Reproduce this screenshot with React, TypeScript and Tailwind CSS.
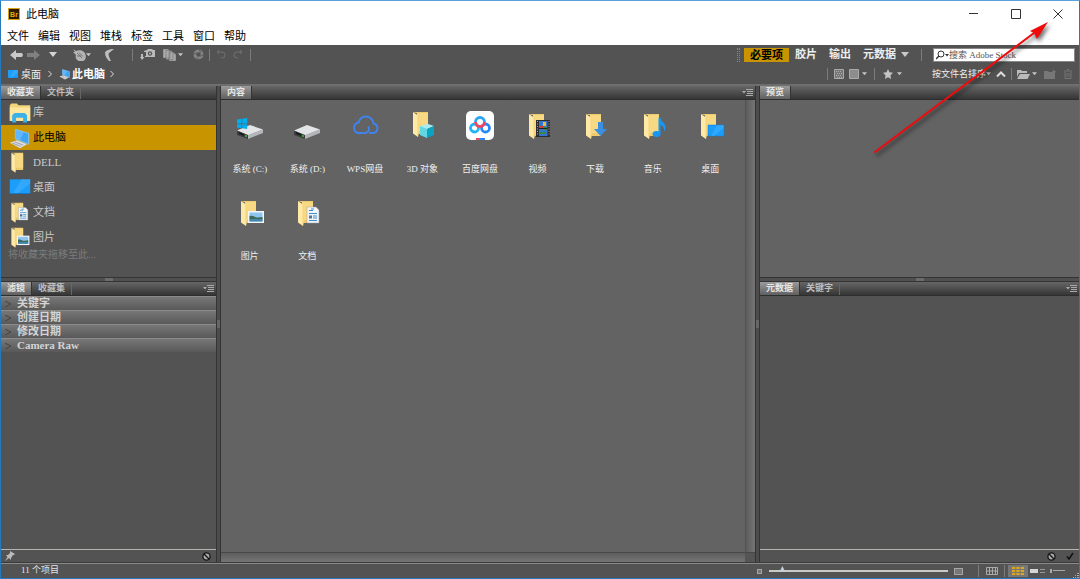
import type { ReactNode } from "react";

const menus = ["文件", "编辑", "视图", "堆栈", "标签", "工具", "窗口", "帮助"];

const favorites = [
  { label: "库", icon: "library" },
  { label: "此电脑", icon: "computer" },
  { label: "DELL", icon: "folder" },
  { label: "桌面", icon: "desktop" },
  { label: "文档", icon: "documents" },
  { label: "图片", icon: "pictures" },
];

const filters = ["关键字", "创建日期", "修改日期", "Camera Raw"];

const items = [
  { label: "系统 (C:)", icon: "systemDrive" },
  { label: "系统 (D:)", icon: "drive" },
  { label: "WPS网盘", icon: "cloud" },
  { label: "3D 对象", icon: "objects" },
  { label: "百度网盘", icon: "baidu" },
  { label: "视频", icon: "videos" },
  { label: "下载", icon: "downloads" },
  { label: "音乐", icon: "music" },
  { label: "桌面", icon: "desktopFolder" },
  { label: "图片", icon: "pictures" },
  { label: "文档", icon: "documents" },
];

function FolderShape() {
  return (
    <>
      <path d="M6 3h15v22h-9V5z" fill="#efcb6b" />
      <path d="M10 4h11v18H10z" fill="#f7d983" />
      <path d="M6 3l5 3.500V28l-5-3.500z" fill="#ffe9a6" />
      <path d="M10.500 6l1.500 1v17l-1 4h-.5z" fill="#f5d67f" />
    </>
  );
}

function DriveShape() {
  return (
    <>
      <path d="M2 19.500L15 14l13 4.500-15 6z" fill="#e3e4e6" />
      <path d="M2 19.500l11 4.500v4L2 24z" fill="#3b3d40" />
      <path d="M13 24l15-5.500v3.500l-15 6z" fill="#b4b6ba" />
      <path d="M4 22l5 2" stroke="#15171a" strokeWidth="1.500" />
      <circle cx="11" cy="25" r="0.900" fill="#35d435" />
    </>
  );
}

const shapes: Record<string, ReactNode> = {
  folder: <FolderShape />,
  drive: <DriveShape />,
  systemDrive: (
    <>
      <DriveShape />
      <path d="M2 8.500l4.500-.7v4.700H2zM7.200 7.700l5-.7v5.500h-5zM2 13.200h4.500v4L2 16.600zM7.200 13.200h5v4.800l-5-.7z" fill="#00adef" />
    </>
  ),
  cloud: (
    <path
      d="M20 22h3a4.800 4.800 0 0 0 .5-9.500A7.600 7.600 0 0 0 8.500 11.500A5.500 5.500 0 0 0 7.500 22H15a4 4 0 0 0 3.500-6"
      fill="none"
      stroke="#3f83f0"
      strokeWidth="2"
      strokeLinecap="round"
    />
  ),
  objects: (
    <>
      <g transform="translate(0 -2)">
        <FolderShape />
      </g>
      <path d="M13 15l8-2 6 2-7 3z" fill="#a5ecf3" />
      <path d="M13 15l7 3v9l-7-3z" fill="#63d6e6" />
      <path d="M20 18l7-3v9l-7 3z" fill="#0ba3c2" />
    </>
  ),
  baidu: (
    <>
      <rect x="1" y="0" width="28" height="29" rx="5" fill="#fff" />
      <g fill="none" strokeWidth="2.800">
        <circle cx="9.500" cy="17" r="4" stroke="#22b5f5" />
        <circle cx="20.500" cy="17" r="4" stroke="#2788fa" />
        <path d="M10.500 11a4.500 4.500 0 0 1 9 0" stroke="#2aa6f7" />
        <path d="M10.500 11a4.500 4.500 0 0 0 9 0" stroke="#f3455f" />
      </g>
      <path d="M11 27h4v2h-4z" fill="#f3455f" />
      <path d="M15 27h5v2h-5z" fill="#2788fa" />
    </>
  ),
  videos: (
    <>
      <FolderShape />
      <path d="M13 9h14v17H13z" fill="#2c2d33" />
      <path d="M16 10h8.500v15H16z" fill="#3774ce" />
      <path d="M14.500 10v15M26 10v15" stroke="#aaa" strokeDasharray="1 1.500" />
      <path d="M20 11h3v4h-3z" fill="#e5bd36" />
      <path d="M17 15h4v2h-4z" fill="#d03c2f" />
      <path d="M21 16h3v3h-3zM17 21h6v2h-6z" fill="#348c40" />
      <path d="M16 17.500h8.500" stroke="#222" />
    </>
  ),
  downloads: (
    <>
      <FolderShape />
      <path d="M18 11h5v7h4l-6.500 7-6.500-7h4z" fill="#3a8fe0" />
    </>
  ),
  music: (
    <>
      <FolderShape />
      <ellipse cx="18.500" cy="23" rx="4" ry="3" fill="#1598f5" />
      <path d="M20.500 6.500h2c0 5 5.500 5 5 10.500-.2 2-1 3-1.500 3.500.5-4-1-5.500-3.500-6.500v9h-2z" fill="#1598f5" />
    </>
  ),
  desktopFolder: (
    <>
      <FolderShape />
      <path d="M13 14h16v11H13z" fill="#1b9dfa" stroke="#0b7cd8" strokeWidth="0.500" />
      <path d="M22 14h6.500v3L19 25h-3z" fill="#45b3ff" opacity="0.500" />
    </>
  ),
  pictures: (
    <>
      <FolderShape />
      <path d="M13 13h16v12H13z" fill="#f3f6f8" />
      <path d="M14.500 14.500h13v9h-13z" fill="#8fc4ef" />
      <path d="M14.500 18c4-1 5 1.500 8 1.500l5-.5v2.500h-13z" fill="#3d6a58" />
      <path d="M14.500 21h13v2.500h-13z" fill="#4686a8" />
    </>
  ),
  documents: (
    <>
      <FolderShape />
      <path d="M15 9h9l3 3v13H15z" fill="#f2f5f7" stroke="#9a9fa5" strokeWidth="0.500" />
      <path d="M17 12.500h4M19 11h3M17 15.500h8M21 18h4M21 20h4M17 22.500h8" stroke="#3e8fd0" />
      <path d="M17 17.500h3v3h-3z" fill="#55728f" />
    </>
  ),
  library: (
    <>
      <path d="M4 6l2-2h7l2 2h15v20H4z" fill="#f5d57a" />
      <path d="M4 9h26v17H4z" fill="#ffe79e" />
      <path d="M7 28v-9l3-3h13l3 3v9h-5v-6h-9v6z" fill="#3ab1e8" />
    </>
  ),
  computer: (
    <>
      <path d="M11 5l17 5v14l-17-7z" fill="#3fa4f5" stroke="#8ecbfa" />
      <path d="M11 5l11 3-5 11-6-2z" fill="#78c4ff" opacity="0.600" />
      <path d="M4 22l9-3 13 5-9 5z" fill="#dadde1" />
      <path d="M7 22.500l11 4M10 21l11 4" stroke="#8f959c" />
    </>
  ),
  desktop: (
    <>
      <path d="M4 5h26v18H4z" fill="#1b9dfa" />
      <path d="M19 5h11v5L14 23H8z" fill="#4db6ff" opacity="0.450" />
      <path d="M4 23h26" stroke="#0b78d0" />
    </>
  ),
};

function Caret({ className = "" }: { className?: string }) {
  return (
    <svg viewBox="0 0 6 4" className={`h-1 w-1.5 shrink-0 ${className}`} fill="#c4c4c4">
      <path d="M0 0h6L3 3.500z" />
    </svg>
  );
}

function Separator() {
  return <span className="h-3 w-px shrink-0 bg-[#7c7c7c]" />;
}

function ToolButton({ label, className, children }: { label: string; className: string; children: ReactNode }) {
  return (
    <button aria-label={label} className={`flex h-4 shrink-0 items-center justify-between ${className}`}>
      {children}
    </button>
  );
}

function Tabs({ tabs, menu = false }: { tabs: string[]; menu?: boolean }) {
  return (
    <div className="flex h-3.5 shrink-0 items-stretch border-b border-[#2e2e2e] bg-linear-to-b from-[#666] to-[#363636] text-[9px] leading-[13px] font-bold">
      {tabs.map((tab, i) => (
        <button
          key={tab}
          className={
            i === 0
              ? "border-r border-[#333] bg-linear-to-b from-[#9b9b9b] to-[#606060] px-1.5 text-[#e6e6e6]"
              : "border-r border-[#666] px-1.5 text-[#bdbdbd]"
          }
        >
          {tab}
        </button>
      ))}
      {menu && (
        <button aria-label="面板菜单" className="mr-0.5 ml-auto flex items-center">
          <svg viewBox="0 0 11 8" className="h-2 w-[11px]" fill="#aaa">
            <path d="M0 2h4L2 4.500zM4 0h7v1H4zM5 2h6v1H5zM5 4h6v1H5zM4 6h7v1H4z" />
          </svg>
        </button>
      )}
    </div>
  );
}

function ColumnDivider() {
  return (
    <div className="flex w-[5px] shrink-0 items-center border-x border-[#333] bg-[#4c4c4c]">
      <span className="h-2 w-full bg-[#666]" />
    </div>
  );
}

function RowDivider() {
  return (
    <div className="flex h-[5px] shrink-0 justify-center border-y border-[#333] bg-[#505050]">
      <span className="h-full w-2 bg-[#6c6c6c]" />
    </div>
  );
}

function NoEntry() {
  return (
    <svg viewBox="0 0 10 10" className="size-[9px]" fill="#aaa" stroke="#151515" strokeWidth="1.500">
      <circle cx="5" cy="5" r="4" />
      <path d="M2 2l6 6" />
    </svg>
  );
}

function TitleBar() {
  return (
    <header className="shrink-0 bg-white text-[11px] text-black">
      <div className="flex h-[26px] items-center pl-[7px]">
        <span className="flex size-3 items-center justify-center border border-[#d9a114] bg-[#2c1d00] font-['Liberation_Sans',sans-serif] text-[7px] leading-none font-bold text-[#e8a90c]">
          Br
        </span>
        <h1 className="ml-1.5">此电脑</h1>
        <div className="mr-4 ml-auto flex items-center gap-8">
          <button aria-label="最小化">
            <svg viewBox="0 0 10 10" className="size-2.5" stroke="#333"><path d="M0 4.500h9" /></svg>
          </button>
          <button aria-label="最大化">
            <svg viewBox="0 0 10 10" className="size-2.5" stroke="#333" fill="none"><path d="M.5.5h9v9h-9z" /></svg>
          </button>
          <button aria-label="关闭">
            <svg viewBox="0 0 10 10" className="size-2.5" stroke="#333"><path d="M.5.5l9 9M9.500.5l-9 9" /></svg>
          </button>
        </div>
      </div>
      <nav className="flex h-[18px] gap-[9px] pl-1.5 leading-[18px]">
        {menus.map((menu) => (
          <button key={menu}>{menu}</button>
        ))}
      </nav>
    </header>
  );
}

function Toolbar() {
  return (
    <div className="flex h-[19px] items-center">
      <ToolButton label="后退" className="ml-[9px] w-[13px]">
        <svg viewBox="0 0 13 10" className="h-2.5 w-[13px]" fill="#c9c9c9"><path d="M0 5l6-5v3h6l1 2-1 2H6v3z" /></svg>
      </ToolButton>
      <ToolButton label="前进" className="ml-1 w-[13px]">
        <svg viewBox="0 0 13 10" className="h-2.5 w-[13px]" fill="#808080"><path d="M13 5L7 0v3H0v4h7v3z" /></svg>
      </ToolButton>
      <ToolButton label="转到父文件夹" className="ml-[9px] w-2">
        <svg viewBox="0 0 8 5" className="h-[5px] w-2" fill="#d5d5d5"><path d="M0 0h8L4 5z" /></svg>
      </ToolButton>
      <ToolButton label="显示最近使用的文件" className="ml-4 w-[18px]">
        <svg viewBox="0 0 13 12" className="h-3 w-[13px]">
          <path d="M0 0l3 2c3-1 6-1 8 1 3 3 2 8-1 9H6C3 11 2 8 3 6L0 3h2z" fill="#b5b5b5" />
          <path d="M4 4l5 5M6 3.500l4 4M4 7h4" stroke="#666" strokeWidth="0.800" fill="none" />
        </svg>
        <Caret className="w-[5px]" />
      </ToolButton>
      <ToolButton label="返回" className="ml-3.5 w-[9px]">
        <svg viewBox="0 0 9 12" className="h-3 w-[9px]" fill="#bdbdbd"><path d="M9 0C4 0 0 2 0 4c0 3 2 6 4 8h2C4 8 3 5 4 4z" /></svg>
      </ToolButton>
      <span className="w-[18px]" />
      <Separator />
      <ToolButton label="从相机获取照片" className="ml-[7px] w-[15px]">
        <svg viewBox="0 0 15 11" className="h-[11px] w-[15px]" fill="#bbb">
          <path d="M4 2l3-1 1-1h4l1 1h2v7H5V7h1V3H4zM1 5h2v3h1.500L2 11 0 8h1z" />
          <circle cx="10" cy="4.500" r="2.200" fill="#555" />
          <circle cx="10" cy="4.500" r="1" />
        </svg>
      </ToolButton>
      <ToolButton label="优化" className="ml-2 w-5">
        <svg viewBox="0 0 13 12" className="h-3 w-[13px]" fill="#aaa" stroke="#666" strokeWidth="0.500">
          <path d="M0 0h5l2 2v7H0zM3 1.500h5l2 2v7H3zM6 3h4l3 2.500V12H6z" />
        </svg>
        <Caret className="w-[5px]" />
      </ToolButton>
      <ToolButton label="在 Camera Raw 中打开" className="ml-2.5 w-[11px]">
        <svg viewBox="0 0 12 12" className="size-[11px]" fill="none" stroke="#858585">
          <circle cx="6" cy="6" r="4" strokeWidth="3" />
          <path d="M6 0l3 4M12 6L8 8M7 12L4 9M0 6l4-2" stroke="#555" />
        </svg>
      </ToolButton>
      <span className="w-[5px]" />
      <Separator />
      <ToolButton label="逆时针旋转" className="ml-1.5 w-2.5">
        <svg viewBox="0 0 10 10" className="size-2.5" fill="none" stroke="#707070"><path d="M1 2h5a3 3 0 0 1 0 6H5M3 0L1 2l2 2" /></svg>
      </ToolButton>
      <ToolButton label="顺时针旋转" className="ml-[7px] w-2.5">
        <svg viewBox="0 0 10 10" className="size-2.5" fill="none" stroke="#707070"><path d="M9 2H4a3 3 0 0 0 0 6h1M7 0l2 2-2 2" /></svg>
      </ToolButton>
      <span className="w-[7px]" />
      <Separator />

      <div className="mr-1 ml-auto flex items-center text-[11px] font-bold text-[#eee]">
        <span className="mr-1 h-3.5 w-[3px] border-x border-dotted border-[#888]" />
        <button className="h-3.5 bg-[#c89400] px-1.5 leading-[14px] text-black">必要项</button>
        <button className="ml-1.5">胶片</button>
        <button className="ml-3">输出</button>
        <button className="ml-3">元数据</button>
        <ToolButton label="更多工作区" className="ml-[5px] w-2">
          <svg viewBox="0 0 8 5" className="h-[5px] w-2" fill="#c9c9c9"><path d="M0 0h8L4 5z" /></svg>
        </ToolButton>
        <span className="w-3" />
        <Separator />
        <label className="ml-[11px] flex h-3.5 w-[142px] items-center border border-[#888] bg-white pl-0.5">
          <svg viewBox="0 0 13 10" className="h-2.5 w-[13px] shrink-0" fill="none" stroke="#333">
            <circle cx="5" cy="4" r="3" />
            <path d="M3 6L0 9" strokeWidth="1.500" />
            <path d="M9 4h4l-2 2.500z" fill="#333" stroke="none" />
          </svg>
          <input
            aria-label="搜索"
            placeholder="搜索 Adobe Stock"
            className="h-3 w-full min-w-0 text-[9px] leading-3 font-normal text-black outline-none placeholder:text-[#555]"
          />
        </label>
      </div>
    </div>
  );
}

function PathBar() {
  return (
    <div className="flex h-5 items-center text-[#eee]">
      <nav className="flex items-center text-[10px]">
        <svg viewBox="4 5 26 18" className="ml-[7px] h-2 w-2.5" preserveAspectRatio="none">{shapes.desktop}</svg>
        <a href="#desktop" className="ml-[3px]">桌面</a>
        <svg viewBox="0 0 4 8" className="ml-[7px] h-2 w-1" fill="none" stroke="#ddd"><path d="M.5 1l3 3-3 3" /></svg>
        <svg viewBox="3 4 26 26" className="ml-[7px] size-[11px]">{shapes.computer}</svg>
        <a href="#computer" className="ml-0.5 text-[11px] font-bold text-white">此电脑</a>
        <svg viewBox="0 0 4 8" className="ml-[5px] h-2 w-1" fill="none" stroke="#ddd"><path d="M.5 1l3 3-3 3" /></svg>
      </nav>
      <div className="mr-[7px] ml-auto flex items-center">
        <Separator />
        <ToolButton label="缩览图质量" className="ml-1.5 w-2.5">
          <svg viewBox="0 0 10 10" className="size-2.5" fill="#777" stroke="#aaa">
            <path d="M.5.5h9v9h-9z" />
            <path d="M2 2.500h6M3 4.500h6M2 6.500h6M3 8.500h6" strokeDasharray="1 1" />
          </svg>
        </ToolButton>
        <ToolButton label="预览质量" className="ml-[5px] w-[18px]">
          <svg viewBox="0 0 10 10" className="size-2.5" fill="#8d8d8d" stroke="#aaa"><path d="M.5.5h9v9h-9z" /></svg>
          <Caret className="w-[5px]" />
        </ToolButton>
        <span className="w-[7px]" />
        <Separator />
        <ToolButton label="按评级筛选" className="ml-2 w-[19px]">
          <svg viewBox="0 0 10 10" className="size-2.5" fill="#c4c4c4"><path d="M5 0l1.500 3.300L10 3.800 7.500 6.300 8 10 5 8.300 2 10l.5-3.700L0 3.800l3.500-.5z" /></svg>
          <Caret className="w-[5px]" />
        </ToolButton>
        <label className="ml-[30px] flex items-center">
          <select aria-label="排序方式" className="w-[54px] appearance-none text-[9px] leading-4 outline-none">
            <option>按文件名排序</option>
            <option>按类型排序</option>
          </select>
          <Caret className="w-[5px]" />
        </label>
        <ToolButton label="升序" className="ml-[5px] w-2.5">
          <svg viewBox="0 0 10 6" className="h-1.5 w-2.5" fill="none" stroke="#ddd" strokeWidth="2"><path d="M1 5.500l4-4 4 4" /></svg>
        </ToolButton>
        <span className="w-[5px]" />
        <Separator />
        <ToolButton label="打开最近使用的文件" className="ml-[5px] w-5">
          <svg viewBox="0 0 13 9" className="h-[9px] w-[13px]" fill="#bbb">
            <path d="M0 0h4l1 1h5v2H2L0 7z" />
            <path d="M3 4h10l-2.500 5H0z" />
          </svg>
          <Caret className="w-[5px]" />
        </ToolButton>
        <ToolButton label="新建文件夹" className="ml-[7px] w-3">
          <svg viewBox="0 0 12 10" className="h-2.5 w-3" fill="#777"><path d="M0 2h4l1 1h3l2-3v2h2l-1 2v6H0z" /></svg>
        </ToolButton>
        <ToolButton label="删除项目" className="ml-2 w-2">
          <svg viewBox="0 0 8 10" className="h-2.5 w-2" fill="none" stroke="#757575"><path d="M0 2h8M3 .5h2M1 3v6.500h6V3M3 4v4M5 4v4" /></svg>
        </ToolButton>
      </div>
    </div>
  );
}

function LeftColumn() {
  return (
    <aside className="flex w-[215px] shrink-0 flex-col">
      <section className="h-[191px] shrink-0 overflow-hidden">
        <Tabs tabs={["收藏夹", "文件夹"]} />
        <ul className="text-[11px] text-[#c9c9c9]">
          {favorites.map((item) => (
            <li key={item.label}>
              <button
                className={
                  item.icon === "computer"
                    ? "flex h-[25px] w-full items-center gap-0.5 bg-[#c89400] pl-2 text-black"
                    : "flex h-[25px] w-full items-center gap-0.5 pl-2"
                }
              >
                <svg viewBox="3 2 28 28" className="size-[22px]">{shapes[item.icon]}</svg>
                {item.label}
              </button>
            </li>
          ))}
        </ul>
        <p className="pl-[7px] text-[10px] leading-[10px] text-[#7c7c7c]">将收藏夹拖移至此...</p>
      </section>
      <RowDivider />
      <section className="flex min-h-0 flex-1 flex-col">
        <Tabs tabs={["滤镜", "收藏集"]} menu />
        {filters.map((filter) => (
          <button
            key={filter}
            className="flex h-3.5 shrink-0 items-center gap-1.5 border-t border-[#8b8b8b] bg-linear-to-b from-[#777] to-[#595959] pl-1 text-[11px] leading-[13px] font-bold text-[#d4d4d4]"
          >
            <svg viewBox="0 0 6 6" className="size-1.5" fill="#666" stroke="#444"><path d="M0 0l6 3-6 3" /></svg>
            {filter}
          </button>
        ))}
        <div className="mt-auto flex h-[13px] shrink-0 items-center justify-between border-t border-[#b5b5b0] pr-[5px] pl-1">
          <button aria-label="保持筛选">
            <svg viewBox="0 0 10 10" className="size-2.5" fill="#bbb"><path d="M5 0l5 3-1 1H8L6 7v2L4 7 0 10l2.500-4L1 4h2l2-2z" /></svg>
          </button>
          <button aria-label="清除筛选"><NoEntry /></button>
        </div>
      </section>
    </aside>
  );
}

function ContentPanel() {
  return (
    <main className="flex min-w-0 flex-1 flex-col bg-[#636363]">
      <Tabs tabs={["内容"]} menu />
      <div className="flex min-h-0 flex-1">
        <ul className="grid flex-1 auto-rows-max grid-cols-[repeat(auto-fill,minmax(57px,1fr))] content-start overflow-hidden pr-1.5">
          {items.map((item) => (
            <li key={item.label} className="flex h-[87px] flex-col items-center pt-[11px]">
              <svg viewBox="0 0 30 30" className="size-[30px] shrink-0">{shapes[item.icon]}</svg>
              <span className="mt-[22px] text-[9px] leading-3 whitespace-nowrap text-[#f0f0f0]">{item.label}</span>
            </li>
          ))}
        </ul>
        <div className="w-2.5 border-l border-[#525252] bg-linear-to-r from-[#5d5d5d] to-[#757575]" />
      </div>
      <div className="flex h-2.5 shrink-0 border-t border-[#484848]">
        <div className="flex-1 bg-linear-to-b from-[#5d5d5d] to-[#757575]" />
        <div className="w-2.5 bg-[#555]" />
      </div>
    </main>
  );
}

function RightColumn() {
  return (
    <aside className="flex w-[319px] shrink-0 flex-col">
      <section className="h-[191px] shrink-0 bg-[#636363]">
        <Tabs tabs={["预览"]} />
      </section>
      <RowDivider />
      <section className="flex min-h-0 flex-1 flex-col">
        <Tabs tabs={["元数据", "关键字"]} menu />
        <div className="mt-auto flex h-[13px] shrink-0 items-center justify-end gap-2.5 border-t border-[#b5b5b0] pr-[5px]">
          <button aria-label="取消"><NoEntry /></button>
          <button aria-label="应用">
            <svg viewBox="0 0 8 8" className="size-2" fill="none" stroke="#111" strokeWidth="1.500"><path d="M1 4.500L3 7l4-6" /></svg>
          </button>
        </div>
      </section>
    </aside>
  );
}

function StatusBar() {
  return (
    <footer className="flex h-[15px] shrink-0 items-center border-t border-[#8a8a8a] pl-5 text-[9px] text-[#e4e4e4]">
      <span>11 个项目</span>
      <div className="ml-auto flex items-center">
        <button aria-label="较小缩览图" className="size-[5px] border border-[#a5a5a5] bg-[#777]" />
        <input
          type="range"
          aria-label="缩览图大小"
          defaultValue={6}
          className="ml-[7px] h-2.5 w-[179px] appearance-none bg-transparent [&::-webkit-slider-runnable-track]:h-0.5 [&::-webkit-slider-runnable-track]:bg-[#c9c9c5] [&::-webkit-slider-thumb]:-mt-1 [&::-webkit-slider-thumb]:h-1.5 [&::-webkit-slider-thumb]:w-1.5 [&::-webkit-slider-thumb]:appearance-none [&::-webkit-slider-thumb]:bg-[#c5ced6] [&::-webkit-slider-thumb]:[clip-path:polygon(50%_0,100%_100%,0_100%)]"
        />
        <button aria-label="较大缩览图" className="ml-1.5 h-[7px] w-[9px] border border-[#a5a5a5] bg-[#777]" />
        <span className="w-[15px]" />
        <Separator />
        <ToolButton label="锁定缩览图网格" className="ml-[7px] w-3">
          <svg viewBox="0 0 12 8" className="h-2 w-3" fill="none" stroke="#aaa"><path d="M.5.5h11v7H.5zM3.500 0v8M6.500 0v8M9.500 0v8M0 4h12" /></svg>
        </ToolButton>
        <span className="w-1.5" />
        <Separator />
        <button aria-label="以缩览图形式查看内容" className="ml-[3px] flex h-3 w-5 items-center justify-center bg-[#777]">
          <svg viewBox="0 0 12 8" className="h-2 w-3" fill="#dba721">
            <path d="M0 0h3.300v2H0zM4.300 0h3.300v2H4.300zM8.700 0H12v2H8.700zM0 3h3.300v2H0zM4.300 3h3.300v2H4.300zM8.700 3H12v2H8.700zM0 6h3.300v2H0zM4.300 6h3.300v2H4.300zM8.700 6H12v2H8.700z" />
          </svg>
        </button>
        <ToolButton label="以详细信息形式查看内容" className="ml-0.5 w-[15px]">
          <svg viewBox="0 0 15 4" className="h-1 w-[15px]" fill="#d5d5d5">
            <path d="M0 0h8v4H0z" />
            <path d="M10 0h5v1h-5zM10 3h5v1h-5z" fill="#999" />
          </svg>
        </ToolButton>
        <ToolButton label="以列表形式查看内容" className="ml-[5px] w-[15px]">
          <svg viewBox="0 0 15 4" className="h-1 w-[15px]" fill="#aaa"><path d="M0 0h2v4H0zM3 1h12v1H3z" /></svg>
        </ToolButton>
        <svg viewBox="0 0 6 6" className="ml-2 size-1.5 self-end" fill="#aaa">
          <path d="M4 0h2v1H4zM2 2h1v1H2zM4 2h2v1H4zM0 4h1v2H0zM2 4h1v2H2zM4 4h2v2H4z" />
        </svg>
      </div>
    </footer>
  );
}

function PointerArrow() {
  return (
    <svg
      viewBox="0 0 200 150"
      className="pointer-events-none absolute top-3 right-[17px] h-[150px] w-[200px] drop-shadow-[2px_3px_2px_rgba(0,0,0,0.6)]"
    >
      <path d="M13 139L172 20" stroke="#f00b0b" strokeWidth="2" strokeLinecap="round" />
      <path d="M186 9l-11 17-3-6-4-2z" fill="#f00b0b" />
    </svg>
  );
}

export default function App() {
  return (
    <div className="relative flex h-screen flex-col overflow-hidden border border-t-[#5aa0e0] border-r-[#2779bd] border-b-[#2779bd] border-l-[#2779bd] bg-[#535353] font-['Liberation_Serif','Noto_Sans_CJK_SC',sans-serif]">
      <TitleBar />
      <div className="shrink-0">
        <Toolbar />
        <PathBar />
      </div>
      <div className="flex min-h-0 flex-1 border-t-2 border-b border-t-[#6e6e6e] border-b-[#3a3a3a]">
        <LeftColumn />
        <ColumnDivider />
        <ContentPanel />
        <ColumnDivider />
        <RightColumn />
      </div>
      <StatusBar />
      <PointerArrow />
    </div>
  );
}
